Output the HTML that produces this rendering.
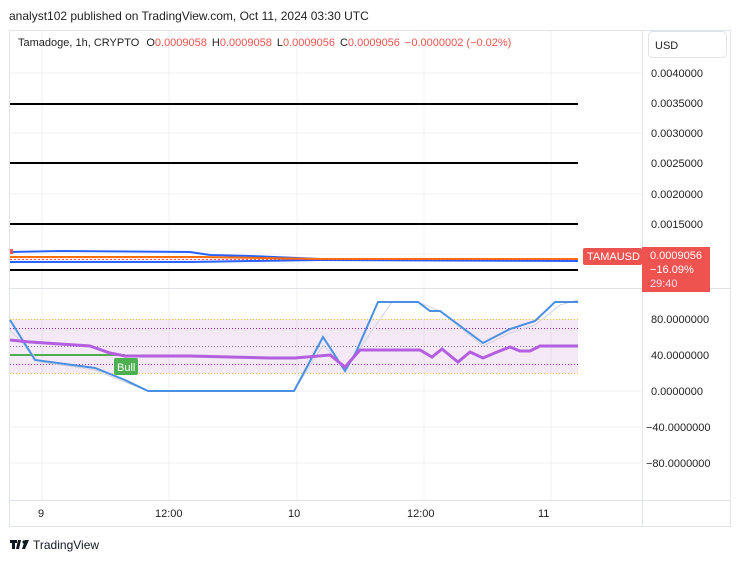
<!DOCTYPE html>
<html><head><meta charset="utf-8"><style>
body{margin:0;width:740px;height:562px;background:#fff;font-family:"Liberation Sans",sans-serif;overflow:hidden}
svg text{font-family:"Liberation Sans",sans-serif}
</style></head><body>
<svg width="740" height="562" viewBox="0 0 740 562" xmlns="http://www.w3.org/2000/svg">
<text x="9" y="20" font-size="12" fill="#222">analyst102 published on TradingView.com, Oct 11, 2024 03:30 UTC</text>
<rect x="9.5" y="30.5" width="721" height="496" fill="none" stroke="#e0e3eb"/>
<g stroke="#f0f1f4" stroke-width="1">
<line x1="42" y1="31" x2="42" y2="500"/><line x1="169" y1="31" x2="169" y2="500"/><line x1="297" y1="31" x2="297" y2="500"/><line x1="424" y1="31" x2="424" y2="500"/><line x1="551" y1="31" x2="551" y2="500"/>
<line x1="10" y1="73" x2="642" y2="73"/><line x1="10" y1="133" x2="642" y2="133"/><line x1="10" y1="194" x2="642" y2="194"/><line x1="10" y1="254" x2="642" y2="254"/>
<line x1="10" y1="391" x2="642" y2="391"/><line x1="10" y1="427" x2="642" y2="427"/><line x1="10" y1="463" x2="642" y2="463"/>
</g>
<line x1="642.5" y1="31" x2="642.5" y2="526" stroke="#e0e3eb"/>
<line x1="10" y1="288.5" x2="730" y2="288.5" stroke="#e0e3eb"/>
<line x1="10" y1="500.5" x2="730" y2="500.5" stroke="#e0e3eb"/>
<text x="18" y="46" font-size="11" fill="#222">Tamadoge, 1h, CRYPTO <tspan dx="4">O</tspan><tspan fill="#ef5350">0.0009058</tspan><tspan dx="5">H</tspan><tspan fill="#ef5350">0.0009058</tspan><tspan dx="5">L</tspan><tspan fill="#ef5350">0.0009056</tspan><tspan dx="5">C</tspan><tspan fill="#ef5350">0.0009056</tspan><tspan dx="5" fill="#ef5350">−0.0000002 (−0.02%)</tspan></text>
<rect x="648.5" y="31.5" width="78" height="26" rx="4" fill="#fff" stroke="#e0e3eb"/>
<text x="655" y="49" font-size="11" fill="#222">USD</text>
<g font-size="11" fill="#222">
<text x="651" y="77">0.0040000</text><text x="651" y="107">0.0035000</text><text x="651" y="137">0.0030000</text><text x="651" y="167">0.0025000</text><text x="651" y="198">0.0020000</text><text x="651" y="228">0.0015000</text>
<text x="651" y="323">80.0000000</text><text x="651" y="359">40.0000000</text><text x="651" y="395">0.0000000</text><text x="646" y="431">−40.0000000</text><text x="646" y="467">−80.0000000</text>
<text x="38" y="517">9</text><text x="155" y="517">12:00</text><text x="288" y="517">10</text><text x="407" y="517">12:00</text><text x="538" y="517">11</text>
</g>
<g stroke="#000" stroke-width="2">
<line x1="10" y1="104" x2="578" y2="104"/><line x1="10" y1="163" x2="578" y2="163"/><line x1="10" y1="224" x2="578" y2="224"/><line x1="10" y1="270" x2="578" y2="270"/>
</g>
<polyline points="10,252 60,251 190,252 210,255 250,256 320,259 578,259" fill="none" stroke="#2962ff" stroke-width="2"/>
<polyline points="10,262 60,262 190,262 250,261 320,260 578,261" fill="none" stroke="#2962ff" stroke-width="2"/>
<polyline points="10,257 200,257 320,259 578,259" fill="none" stroke="#ff6d00" stroke-width="2"/>
<line x1="10" y1="259.5" x2="578" y2="259.5" stroke="#ef5350" stroke-dasharray="2 2"/>
<rect x="10" y="249" width="3" height="5" fill="#ef5350"/>
<rect x="583" y="248" width="59" height="17" rx="2" fill="#ef5350"/>
<text x="587" y="260" font-size="11" fill="#fff">TAMAUSD</text>
<rect x="642" y="247" width="68" height="45" fill="#ef5350"/>
<text x="650" y="259" font-size="11" fill="#fff">0.0009056</text>
<text x="650" y="273" font-size="11" fill="#fff">−16.09%</text>
<text x="650" y="287" font-size="11" fill="#fde">29:40</text>
<rect x="10" y="319" width="568" height="54" fill="#9c27b0" fill-opacity="0.1"/>
<g fill="none" stroke-width="1">
<line x1="10" y1="319.5" x2="578" y2="319.5" stroke="#f0c419" stroke-dasharray="1 2"/>
<line x1="10" y1="373.5" x2="578" y2="373.5" stroke="#f0c419" stroke-dasharray="1 2"/>
<line x1="10" y1="328.5" x2="578" y2="328.5" stroke="#9c27b0" stroke-dasharray="1 2"/>
<line x1="10" y1="364.5" x2="578" y2="364.5" stroke="#9c27b0" stroke-dasharray="1 2"/>
<line x1="10" y1="346.5" x2="578" y2="346.5" stroke="#787b86" stroke-dasharray="1 2"/>
</g>
<line x1="10" y1="355" x2="125" y2="355" stroke="#4caf50" stroke-width="2"/>
<polyline points="10,330 40,362 95,370 125,382 148,391 294,391 323,345 345,368 360,348 392,302 418,302 440,311 483,346 510,333 535,325 560,305 578,300" fill="none" stroke="#d1d4dc" stroke-width="1"/>
<polyline points="10,320 35,360 95,368 125,380 148,391 294,391 323,337 345,371 356,352 378,302 418,302 430,311 440,311 483,343 510,329 535,321 555,302 578,302" fill="none" stroke="#4a90e2" stroke-width="2"/>
<polyline points="10,340 30,342 60,344 90,346 110,353 125,356 190,356 270,358 295,358 330,355 345,367 360,350 420,350 432,357 442,349 458,362 470,352 483,358 497,352 510,347 520,351 530,351 540,346 578,346" fill="none" stroke="#b45ee0" stroke-width="3"/>
<rect x="114" y="358" width="24" height="17" rx="2" fill="#4caf50"/>
<text x="117" y="371" font-size="11" fill="#fff">Bull</text>
<path d="M10 540h7v3h-2v6h-3v-6h-2z M18 540h3l-2 9h-3z" fill="#131722"/>
<circle cx="24" cy="542" r="1.6" fill="#131722"/>
<path d="M25 540h4l-4 9h-3z" fill="#131722"/>
<text x="33" y="549" font-size="12" fill="#131722">TradingView</text>
</svg>
</body></html>
